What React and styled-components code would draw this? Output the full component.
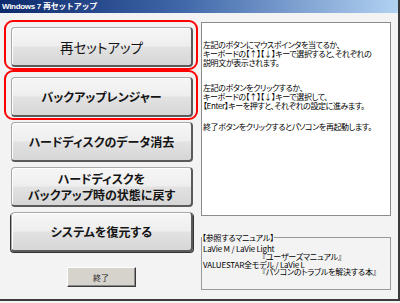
import React from "react";
import styled, { createGlobalStyle } from "styled-components";

const Global = createGlobalStyle`
  html, body { margin: 0; padding: 0; background: #f3f3f3; }
  #root { width: 400px; height: 303px; }
`;

const Window = styled.div`
  box-sizing: border-box;
  width: 400px;
  height: 301px;
  background: #f3f3f3;
  border-right: 2px solid #3a3a3a;
  border-bottom: 2px solid #3a3a3a;
  display: flex;
  flex-direction: column;
  font-family: "Noto Sans CJK JP", sans-serif;
  font-feature-settings: "palt";
`;

const TitleBar = styled.div`
  height: 13px;
  flex: none;
  background: linear-gradient(to right, #0c2a6c 0%, #3f66a8 45%, #b2d2f2 100%);
  color: #fff;
  font: bold 8px/13px "Liberation Sans", "Noto Sans CJK JP", sans-serif;
  letter-spacing: -0.3px;
  padding-left: 2px;
  white-space: nowrap;
`;

const Content = styled.div`
  flex: 1;
  display: flex;
  gap: 3px;
  padding: 7px 0 0 4px;
`;

const LeftCol = styled.div`
  width: 194px;
  display: flex;
  flex-direction: column;
  align-items: center;
`;

const Slot = styled.div`
  box-sizing: border-box;
  width: 194px;
  border: 2px solid ${(p) => (p.$hl ? "#ff0000" : "transparent")};
  border-radius: 9px;
  padding: ${(p) => (p.$hl ? "5px 3px 1px 5px" : "0 3px 1px 5px")};
`;

const BigButton = styled.div`
  box-sizing: border-box;
  width: 182px;
  height: 40px;
  display: flex;
  flex-direction: column;
  align-items: center;
  justify-content: center;
  border: 1px solid #a8a8a8;
  border-right: 2px solid #5a5a5a;
  border-bottom: 2px solid #5a5a5a;
  border-radius: 4px;
  background: linear-gradient(#f6f6f6 0%, #eeeeee 48%, #e2e2e2 52%, #d6d6d6 100%);
  box-shadow: inset 1px 1px 0 #ffffff, ${(p) => (p.$framed ? "-1px 1px 0 #333, 1px 1px 0 #333" : "0 0 0 transparent")};
  color: #141414;
  font-size: ${(p) => (p.$large ? "13.5px" : "12px")};
  font-weight: ${(p) => (p.$large ? 400 : 700)};
  line-height: 16px;
  white-space: nowrap;
`;

const ExitButton = styled.div`
  box-sizing: border-box;
  width: 69px;
  height: 20px;
  margin-top: 12px;
  background: #d6d3cc;
  border: 1px solid;
  border-color: #ffffff #3a3a3a #3a3a3a #ffffff;
  box-shadow: inset -1px -1px 0 #8a8a8a;
  display: flex;
  align-items: center;
  justify-content: center;
  font-size: 8px;
  color: #222;
`;

const RightCol = styled.div`
  width: 190px;
  display: flex;
  flex-direction: column;
  padding-top: 2px;
`;

const Panel = styled.div`
  box-sizing: border-box;
  height: 194px;
  background: #ffffff;
  border: 1px solid #8c8c8c;
  padding: 17px 0 0 1px;
  font-size: 8px;
  line-height: 9px;
  letter-spacing: -0.4px;
  color: #000;
  white-space: nowrap;
`;

const Para = styled.p`
  margin: 0 0 ${(p) => p.$after || 0}px 0;
`;

const Group = styled.fieldset`
  margin: 17px 0 0 0;
  padding: 3px 0 13px 1px;
  border: 1px solid #9a9a9a;
  font-size: 8px;
  line-height: 7.8px;
  letter-spacing: -0.2px;
  color: #000;
  white-space: nowrap;
`;

const Legend = styled.legend`
  padding: 0;
  margin-left: -1px;
  line-height: 9px;
  background: #f3f3f3;
`;

const Line = styled.div`
  padding-left: ${(p) => p.$indent || 0}px;
`;

export default function App() {
  return (
    <>
      <Global />
      <Window>
        <TitleBar>Windows 7 再セットアップ</TitleBar>
        <Content>
          <LeftCol>
            <Slot $hl>
              <BigButton $large>再セットアップ</BigButton>
            </Slot>
            <Slot $hl>
              <BigButton>バックアップレンジャー</BigButton>
            </Slot>
            <Slot>
              <BigButton>ハードディスクのデータ消去</BigButton>
            </Slot>
            <Slot>
              <BigButton>
                <span>ハードディスクを</span>
                <span>バックアップ時の状態に戻す</span>
              </BigButton>
            </Slot>
            <Slot>
              <BigButton $framed>システムを復元する</BigButton>
            </Slot>
            <ExitButton>終了</ExitButton>
          </LeftCol>
          <RightCol>
            <Panel>
              <Para $after={16}>
                左記のボタンにマウスポインタを当てるか、
                <br />
                キーボードの【↑】【↓】キーで選択すると、それぞれの
                <br />
                説明文が表示されます。
              </Para>
              <Para $after={12}>
                左記のボタンをクリックするか、
                <br />
                キーボードの【↑】【↓】キーで選択して、
                <br />
                【Enter】キーを押すと、それぞれの設定に進みます。
              </Para>
              <Para>終了ボタンをクリックするとパソコンを再起動します。</Para>
            </Panel>
            <Group>
              <Legend>【参照するマニュアル】</Legend>
              <Line>LaVie M / LaVie Light</Line>
              <Line $indent={59}>『ユーザーズマニュアル』</Line>
              <Line>VALUESTAR全モデル / LaVie L</Line>
              <Line $indent={59}>『パソコンのトラブルを解決する本』</Line>
            </Group>
          </RightCol>
        </Content>
      </Window>
    </>
  );
}
